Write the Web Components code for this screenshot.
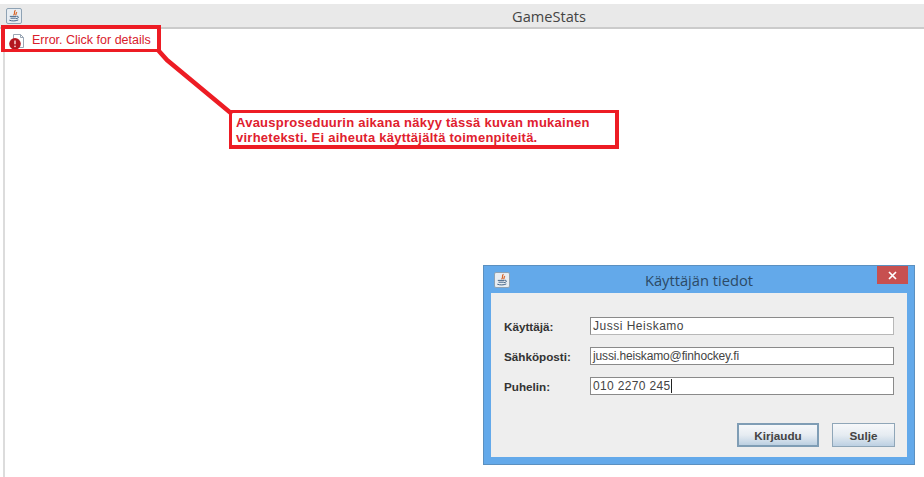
<!DOCTYPE html>
<html lang="fi"><head><meta charset="utf-8"><title>GameStats</title>
<style>
html,body{margin:0;padding:0;background:#fff;width:924px;height:477px;overflow:hidden}
body{font-family:"Liberation Sans",Arial,sans-serif}
</style></head><body>
<app-window>
  <error-status slot="status">Error. Click for details</error-status>
  <annotation-note></annotation-note>
  <user-dialog></user-dialog>
</app-window>
<script>
const JAVA=`<svg width="16" height="16" viewBox="0 0 16 16" aria-hidden="true" style="display:block"><rect x=".5" y=".5" width="15" height="15" rx="1.500" fill="#e8edf2" stroke="#8ea2b4"/><path d="M9.500 2.200C7 4 10 5 7.500 7.200M11 4.200C9.300 5.200 10.800 6 9.500 7.200" fill="none" stroke="#d9662a" stroke-width="1.200"/><path d="M3.800 8.400h6.800M4.500 10.200h5.400M3.300 12.200c2.500 1 6.500 1 9-.3M10.800 8.300c2.500-.3 2 2.200-.8 2.400" fill="none" stroke="#47678a" stroke-width="1"/></svg>`;
function def(n,html){customElements.define(n,class extends HTMLElement{constructor(){super();this.attachShadow({mode:'open'}).innerHTML=html}})}
def('java-icon',`<style>:host{display:block;width:16px;height:16px}</style>${JAVA}`);
def('title-bar',`<style>:host{display:flex;align-items:center;height:23px;background:#e9e9e9;border-bottom:2px solid #cbcbcb;padding-left:6px;position:relative;color:#444;font:14.600px "Open Sans","Noto Sans",sans-serif}
.t{flex:1;text-align:center;padding-left:152px}</style><java-icon></java-icon><div class="t"><slot></slot></div>`);
def('error-status',`<style>:host{display:flex;align-items:center;gap:7px;height:24px;padding-left:9px;color:#d8202c;font:12.500px "Liberation Sans",Arial,sans-serif}
span{position:relative;top:-1px}</style>
<svg width="16" height="17" viewBox="0 0 16 17" aria-hidden="true"><path d="M4.500 1.500h7l3 3v10h-10z" fill="#fff" stroke="#9aa6b4"/><path d="M11.500 1.500v3h3" fill="none" stroke="#9aa6b4"/><circle cx="6" cy="10.800" r="5.800" fill="#b3161f"/><path d="M6 7.500v3.800" stroke="#f4c9c9" stroke-width="1.600"/><circle cx="6" cy="13.300" r=".9" fill="#f4c9c9"/></svg><span><slot></slot></span>`);
def('app-window',`<style>:host{display:flex;flex-direction:column;width:924px;height:477px;padding-top:4px;box-sizing:border-box;position:relative}
.body{flex:1;margin-left:3px;border-left:2px solid #dcdcdc;background:#fff}
.status{position:relative;margin-left:-5px}</style>
<title-bar>GameStats</title-bar><div class="body"><div class="status"><slot name="status"></slot></div></div><slot></slot>`);
def('annotation-note',`<style>:host{display:block;position:absolute;inset:0;pointer-events:none}
svg{position:absolute;left:0;top:0}
.a{position:absolute;box-sizing:border-box;border:3px solid #ed1c24}
.one{left:1px;top:25px;width:160px;height:27px;border-width:4px 4px 3px 4px}
.two{left:229px;top:110px;width:390px;height:39px;border-width:3px 4px 4px 3px;padding:2px 0 0 4px;color:#e0202e;font:bold 13px/15px "Liberation Sans",Arial,sans-serif;letter-spacing:.25px;white-space:nowrap}</style>
<svg width="924" height="477" aria-hidden="true"><path d="M158 50L167 60L232 114" fill="none" stroke="#ed1c24" stroke-width="4.500"/></svg>
<div class="a one"></div>
<div class="a two">Avausproseduurin aikana näkyy tässä kuvan mukainen<br>virheteksti. Ei aiheuta käyttäjältä toimenpiteitä.</div>`);
def('form-row',`<style>:host{display:flex;align-items:center;height:18px;font:bold 11.700px "Liberation Sans",Arial,sans-serif;color:#333}
.l{width:86px;flex:none}
.f{box-sizing:border-box;width:304px;height:18px;background:#fff;border:1px solid #b8b8b8;border-top-color:#8a8a8a;border-left-color:#8a8a8a;padding-left:2px;font:12px/16px "Liberation Sans",Arial,sans-serif;color:#444;white-space:nowrap;letter-spacing:var(--ls,0)}
:host([dark]) .f{border-color:#8a8a8a}
:host([caret]) .v{border-right:1px solid #222}</style>
<div class="l"><slot name="label"></slot></div><div class="f"><span class="v"><slot></slot></span></div>`);
def('j-button',`<style>:host{display:flex;align-items:center;justify-content:center;box-sizing:border-box;height:24px;border:1px solid #8fa6b8;background:linear-gradient(#f6f8fa,#e6ecf2 50%,#bcd0e2);font:bold 11.700px "Liberation Sans",Arial,sans-serif;color:#444}
:host([default]){border:2px solid #7f9db5}</style><slot></slot>`);
def('user-dialog',`<style>:host{display:flex;flex-direction:column;position:absolute;left:483px;top:265px;width:432px;height:200px;box-sizing:border-box;background:#63a9ea;border:1px solid #5b90c0;padding:0 7px 7px}
.cap{display:flex;align-items:center;height:27px;flex:none;position:relative;color:#2c4a66;font:14.700px "Open Sans","Noto Sans",sans-serif;padding-left:3px}
.cap span{flex:1;text-align:center;padding-right:19px}
.x{position:absolute;right:-1px;top:0;width:31px;height:18px;background:#c75050;color:#fff;display:flex;align-items:center;justify-content:center}
.panel{flex:1;background:#eeeeee;padding:24px 13px 10px 13px;display:flex;flex-direction:column;gap:12px}
.btns{display:flex;justify-content:flex-end;gap:13px;margin:16px -1px 0 0}
</style>
<div class="cap"><java-icon></java-icon><span>Käyttäjän tiedot</span><div class="x"><svg width="9" height="9" viewBox="0 0 9 9" aria-hidden="true"><path d="M1 1l7 7M8 1l-7 7" stroke="#fff" stroke-width="1.700"/></svg></div></div>
<div class="panel">
<form-row style="--ls:.5px"><span slot="label">Käyttäjä:</span>Jussi Heiskamo</form-row>
<form-row dark style="--ls:-.15px"><span slot="label">Sähköposti:</span>jussi.heiskamo@finhockey.fi</form-row>
<form-row dark caret style="--ls:.35px"><span slot="label">Puhelin:</span>010 2270 245</form-row>
<div class="btns"><j-button default style="width:82px">Kirjaudu</j-button><j-button style="width:63px">Sulje</j-button></div>
</div>`);
</script>
</body></html>
